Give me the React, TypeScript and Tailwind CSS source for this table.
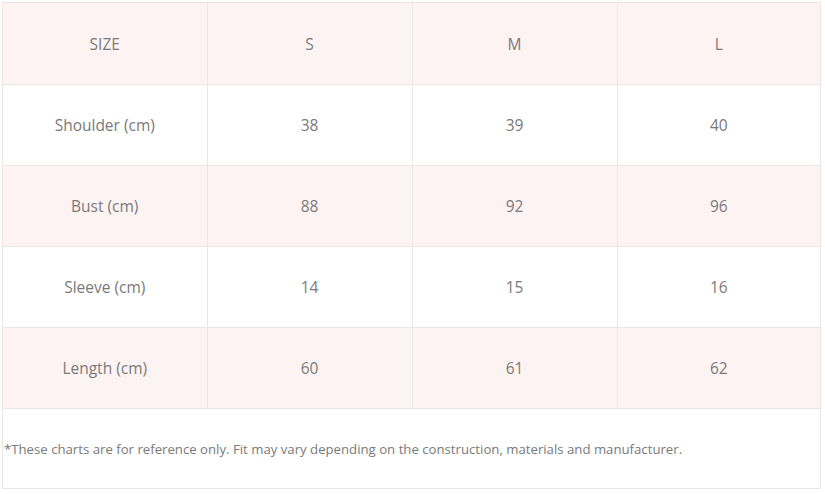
const rows = [
  { label: "Shoulder (cm)", s: "38", m: "39", l: "40" },
  { label: "Bust (cm)", s: "88", m: "92", l: "96" },
  { label: "Sleeve (cm)", s: "14", m: "15", l: "16" },
  { label: "Length (cm)", s: "60", m: "61", l: "62" },
];

const App = () => {
  return (
    <div className="w-[825px] h-[494px] bg-white pl-[2px] pt-[2px] font-['Open_Sans',sans-serif] text-[#7a7a7a]">
      <div className="w-[819px] border border-[#ebe6e6]">
        <table className="w-full border-collapse table-fixed text-[15.5px]">
          <tbody>
            <tr className="h-[81px] bg-[#fdf3f2]">
              <td className="w-[204px] pt-[2px] border-r border-b border-[#ede6e6] text-center">SIZE</td>
              <td className="w-[205px] pt-[2px] border-r border-b border-[#ede6e6] text-center">S</td>
              <td className="w-[205px] pt-[2px] border-r border-b border-[#ede6e6] text-center">M</td>
              <td className="pt-[2px] border-b border-[#ede6e6] text-center">L</td>
            </tr>
            {rows.map((r, i) => (
              <tr key={r.label} className={`h-[81px] ${i % 2 === 1 ? "bg-[#fdf3f2]" : "bg-white"}`}>
                <td className="pt-[2px] border-r border-b border-[#ede6e6] text-center">{r.label}</td>
                <td className="pt-[2px] border-r border-b border-[#ede6e6] text-center">{r.s}</td>
                <td className="pt-[2px] border-r border-b border-[#ede6e6] text-center">{r.m}</td>
                <td className="pt-[2px] border-b border-[#ede6e6] text-center">{r.l}</td>
              </tr>
            ))}
          </tbody>
        </table>
        <div className="h-[79px] flex items-center pt-[3px] px-[1px] text-[13.2px]">
          *These charts are for reference only. Fit may vary depending on the construction, materials and manufacturer.
        </div>
      </div>
    </div>
  );
};

export default App;
